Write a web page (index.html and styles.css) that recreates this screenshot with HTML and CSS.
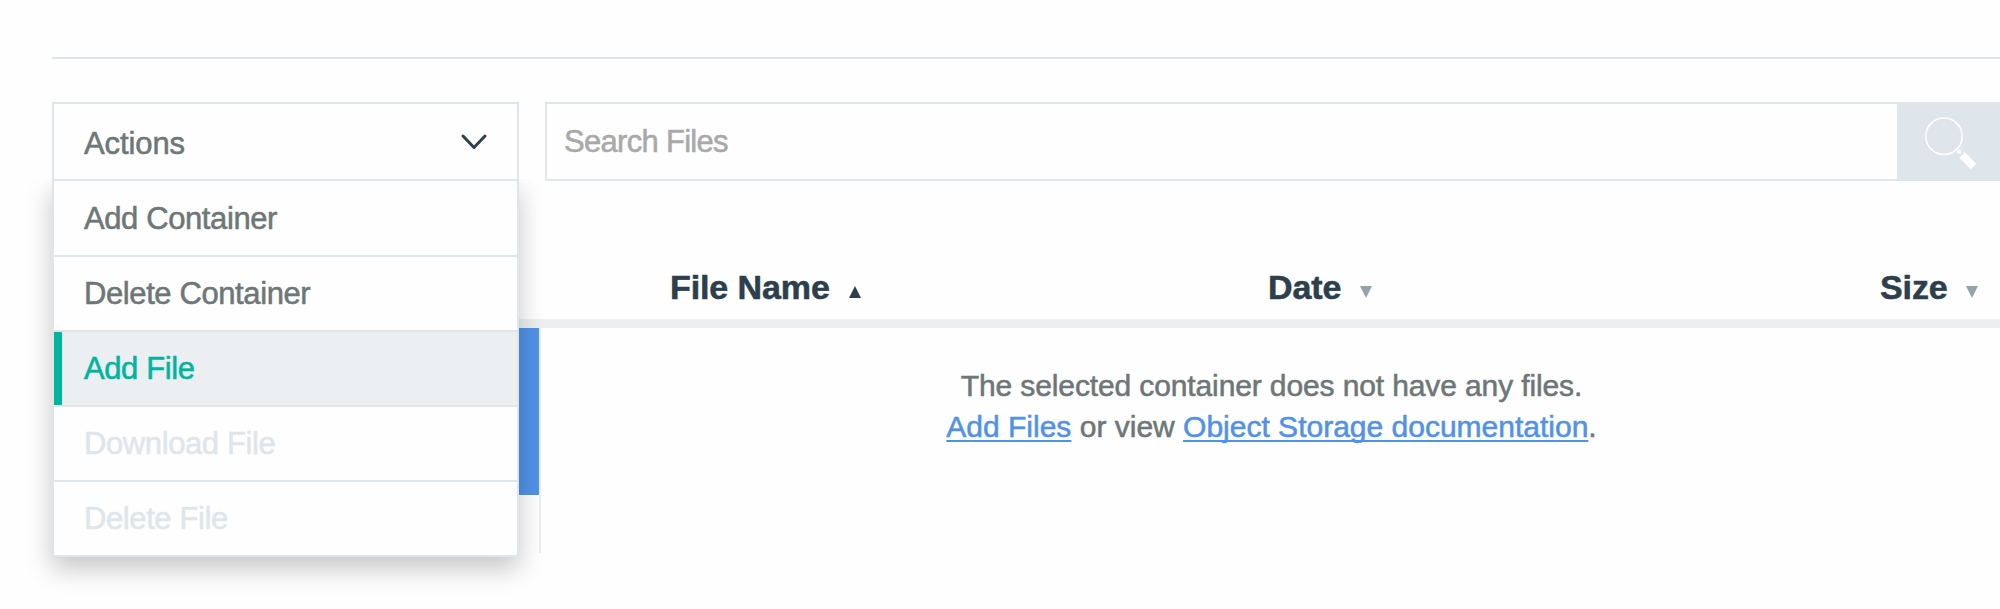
FILE: index.html
```html
<!DOCTYPE html>
<html lang="en">
<head>
<meta charset="utf-8">
<title>Object Storage</title>
<link rel="stylesheet" href="styles.css">
</head>
<body>
<main class="page">
  <div class="toolbar">
    <div class="dropdown">
      <button class="dropdown-toggle"><span>Actions</span>
        <svg class="chevron" width="28" height="18" viewBox="0 0 28 18"><path d="M3 3 14 14.500 25 3" fill="none" stroke="#2d3e4c" stroke-width="3" stroke-linecap="round" stroke-linejoin="round"/></svg>
      </button>
      <ul class="menu">
        <li class="item">Add Container</li>
        <li class="item">Delete Container</li>
        <li class="item active">Add File</li>
        <li class="item disabled">Download File</li>
        <li class="item disabled">Delete File</li>
      </ul>
    </div>
    <div class="search">
      <input class="search-input" type="text" placeholder="Search Files">
      <button class="search-button" aria-label="Search">
        <svg width="52" height="54" viewBox="0 0 52 54" fill="none"><circle cx="19" cy="19.200" r="18.200" stroke="#fff" stroke-width="1.600"/><circle cx="34" cy="34.700" r="2" fill="#fff"/><path d="M37 38 48.500 49.500" stroke="#fff" stroke-width="7.500"/></svg>
      </button>
    </div>
  </div>
  <div class="headings">
    <div class="heading name">File Name<svg class="sort" width="12" height="12" viewBox="0 0 12 12"><path d="M6 0 12 12H0z" fill="#2d3e4c"/></svg></div>
    <div class="heading date">Date<svg class="sort" width="12" height="12" viewBox="0 0 12 12"><path d="M0 0H12L6 12z" fill="#93a3ab"/></svg></div>
    <div class="heading size">Size<svg class="sort" width="12" height="12" viewBox="0 0 12 12"><path d="M0 0H12L6 12z" fill="#93a3ab"/></svg></div>
  </div>
  <div class="content">
    <aside class="containers"><div class="selected"></div></aside>
    <section class="empty">
      <p class="line first">The selected container does not have any files.</p>
      <p class="line second"><a href="#">Add Files</a> or view <a href="#">Object Storage documentation</a>.</p>
    </section>
  </div>
</main>
</body>
</html>
```
FILE: styles.css
```css
* { box-sizing: border-box; }
body {
  margin: 0;
  background: #fefefe;
  color: #6d7777;
  font-family: "Liberation Sans", Arial, sans-serif;
  font-size: 31px;
  -webkit-text-stroke: .55px;
  overflow: hidden;
}
.page { height: 609px; padding: 57px 0 0 52px; }
.toolbar {
  display: flex;
  gap: 26px;
  height: 124px;
  padding-top: 43px;
  border-top: 2px solid #dfe6eb;
}
.dropdown { position: relative; flex: none; width: 467px; height: 79px; }
.dropdown-toggle {
  display: flex;
  align-items: center;
  justify-content: space-between;
  width: 100%;
  height: 79px;
  padding: 4px 29px 0 30px;
  border: 2px solid #dfe6eb;
  background: #fefefe;
  color: inherit;
  font: inherit;
  letter-spacing: -.1px;
}
.chevron { margin-top: -3px; }
.menu {
  position: absolute;
  top: 77px;
  left: 0;
  z-index: 2;
  width: 467px;
  margin: 0;
  padding: 1px 0 0;
  list-style: none;
  border: 2px solid #dfe6eb;
  background: #fefefe;
  box-shadow: 0 12px 24px rgba(0, 0, 0, .22);
  clip-path: inset(0 -40px -50px -40px);
  letter-spacing: -.4px;
}
.item {
  height: 75px;
  padding-left: 30px;
  border-bottom: 2px solid #dfe6eb;
  background: #fefefe;
  line-height: 73px;
}
.item:last-child { height: 73px; border-bottom: 0; }
.item.active {
  background: #ebeff2;
  box-shadow: inset 8px 0 #00b4a0;
  color: #00b4a0;
}
.item.disabled { color: #dfe6eb; }
.search { display: flex; flex: 1; height: 79px; border: 2px solid #dfe6eb; border-right: 0; }
.search-input {
  flex: 1;
  min-width: 0;
  padding: 0 0 0 17px;
  border: 0;
  background: #fefefe;
  font: inherit;
  letter-spacing: -.7px;
}
.search-input::placeholder { color: #a9a9a9; opacity: 1; }
.search-button { display: flex; width: 103px; padding: 13px 0 0 28px; border: 0; background: #dfe6eb; }
.headings {
  display: grid;
  grid-template-columns: 598px 612px 1fr;
  height: 147px;
  padding: 85px 0 0 618px;
  border-bottom: 9px solid #ebeff2;
  color: #2d3e4c;
  font-size: 34px;
  font-weight: 700;
  line-height: 42px;
  letter-spacing: -.1px;
  white-space: nowrap;
}
.sort { margin-left: 19px; position: relative; top: -1px; }
.size .sort { margin-left: 18px; }
.content { display: flex; }
.containers { width: 489px; height: 225px; border-right: 2px solid #ebeff2; }
.selected { height: 167px; background: #5192e7; }
.empty { flex: 1; padding: 37px 0 0 2px; font-size: 30px; text-align: center; }
.line { margin: 0; line-height: 41px; white-space: nowrap; }
.first { letter-spacing: -.12px; }
.empty a { color: #5192e7; text-decoration-thickness: 2px; text-underline-offset: 3px; text-decoration-skip-ink: none; }
```
